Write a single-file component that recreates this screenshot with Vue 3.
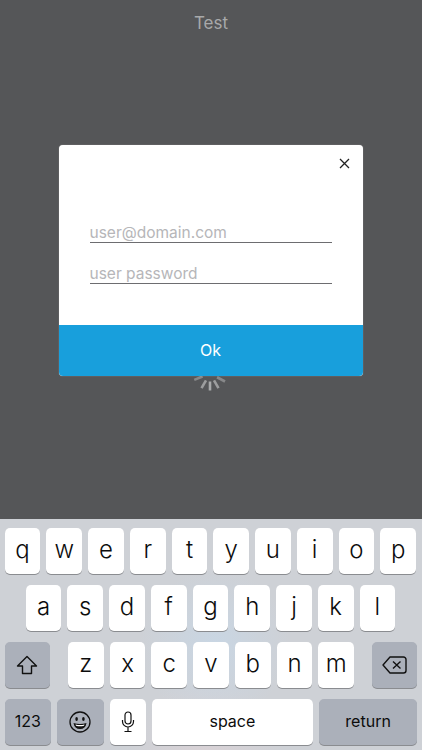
<script setup>
const row1 = ['q', 'w', 'e', 'r', 't', 'y', 'u', 'i', 'o', 'p']
const row2 = ['a', 's', 'd', 'f', 'g', 'h', 'j', 'k', 'l']
const row3 = ['z', 'x', 'c', 'v', 'b', 'n', 'm']
const spokes = [
  { a: 68, o: 0.6 },
  { a: 30, o: 0.85 },
  { a: 0, o: 1 },
  { a: -30, o: 0.85 },
  { a: -62, o: 0.6 },
]
</script>

<template>
  <div class="screen">
    <main class="stage">
      <header class="title">Test</header>
      <section class="modal">
        <div class="modal-top">
          <svg class="close" width="11" height="11" viewBox="0 0 11 11" aria-label="Close">
            <path d="M1 1 L10 10 M10 1 L1 10" stroke="#222" stroke-width="1.3" fill="none" />
          </svg>
        </div>
        <form class="fields" @submit.prevent>
          <div class="field">user@domain.com</div>
          <div class="field">user password</div>
        </form>
        <button class="ok" type="button">Ok</button>
      </section>
      <svg class="spinner" width="36" height="16" viewBox="-18 2.5 36 16" aria-hidden="true">
        <line
          v-for="s in spokes"
          :key="s.a"
          x1="0"
          y1="8"
          x2="0"
          y2="17"
          stroke="#a9aaab"
          stroke-width="2.6"
          :opacity="s.o"
          :transform="`rotate(${s.a} 0 0)`"
        />
      </svg>
    </main>

    <section class="keyboard">
      <div class="row row1">
        <div v-for="k in row1" :key="k" class="key">{{ k }}</div>
      </div>
      <div class="row row2">
        <div v-for="k in row2" :key="k" class="key">{{ k }}</div>
      </div>
      <div class="row row3">
        <div class="key fn shift">
          <svg width="22" height="20" viewBox="0 0 22 20">
            <path d="M11 1.5 L20.5 11 H15.5 V18.5 H6.5 V11 H1.5 Z" fill="none" stroke="#111" stroke-width="1.4" stroke-linejoin="round" />
          </svg>
        </div>
        <div class="letters">
          <div v-for="k in row3" :key="k" class="key">{{ k }}</div>
        </div>
        <div class="key fn del">
          <svg width="25" height="18" viewBox="0 0 25 18">
            <path d="M8 1 H21.5 A2.5 2.5 0 0 1 24 3.5 V14.5 A2.5 2.5 0 0 1 21.5 17 H8 L1 9 Z" fill="none" stroke="#111" stroke-width="1.4" stroke-linejoin="round" />
            <path d="M11 5.5 L18.5 12.5 M18.5 5.5 L11 12.5" stroke="#111" stroke-width="1.4" fill="none" />
          </svg>
        </div>
      </div>
      <div class="row row4">
        <div class="key fn small w123">123</div>
        <div class="key fn emoji">
          <svg width="22" height="22" viewBox="0 0 22 22">
            <circle cx="11" cy="11" r="10" fill="none" stroke="#111" stroke-width="1.3" />
            <ellipse cx="7.6" cy="8" rx="1.3" ry="2" fill="#111" />
            <ellipse cx="14.4" cy="8" rx="1.3" ry="2" fill="#111" />
            <path d="M4.5 12 Q11 14.2 17.5 12 Q16.5 18 11 18 Q5.5 18 4.5 12 Z" fill="#111" />
            <path d="M6.5 13.4 Q11 14.8 15.5 13.4 L15 14.8 Q11 15.8 7 14.8 Z" fill="#fff" />
          </svg>
        </div>
        <div class="key mic">
          <svg width="14" height="22" viewBox="0 0 14 22">
            <rect x="4" y="1" width="6" height="12" rx="3" fill="none" stroke="#111" stroke-width="1.2" />
            <path d="M1.5 9 V10.5 A5.5 5.5 0 0 0 12.5 10.5 V9 M7 16 V20 M3.5 20.5 H10.5" fill="none" stroke="#111" stroke-width="1.2" />
          </svg>
        </div>
        <div class="key small space">space</div>
        <div class="key fn small ret">return</div>
      </div>
    </section>
  </div>
</template>

<style>
html, body { margin: 0; padding: 0; }
</style>

<style scoped>
.screen {
  width: 422px;
  height: 750px;
  display: flex;
  flex-direction: column;
  overflow: hidden;
  font-family: Inter, "Liberation Sans", sans-serif;
}
.stage {
  height: 519px;
  background: #555658;
  display: flex;
  flex-direction: column;
  align-items: center;
}
.title {
  height: 46px;
  line-height: 46px;
  font-size: 17px;
  color: #a8a9aa;
}
.modal {
  position: relative;
  z-index: 1;
  width: 304px;
  height: 231px;
  margin: 99px 0 0 -1px;
  background: #fff;
  border-radius: 4px;
  overflow: hidden;
  display: flex;
  flex-direction: column;
  box-shadow: 0 0 1px rgba(255, 255, 255, 0.6);
}
.modal-top {
  height: 37px;
  display: flex;
  justify-content: flex-end;
  align-items: flex-start;
}
.close { margin: 13px 13px 0 0; }
.fields {
  height: 143px;
  box-sizing: border-box;
  padding: 39px 31px 0;
  display: flex;
  flex-direction: column;
  gap: 19px;
}
.field {
  box-sizing: border-box;
  height: 22px;
  line-height: 23px;
  font-size: 15.5px;
  color: #b6b6b9;
  border-bottom: 1px solid #6d6d70;
}
.ok {
  height: 51px;
  padding: 0 0 2px;
  border: 0;
  background: #189fdc;
  color: #fff;
  font: inherit;
  font-size: 16px;
}
.spinner { margin-left: -3px; }
.keyboard {
  height: 231px;
  box-sizing: border-box;
  padding: 9px 4.7px 5px;
  display: flex;
  flex-direction: column;
  gap: 11px;
  background:
    radial-gradient(circle at 215px 125px, #c9d6e3 0, rgba(201, 214, 227, 0) 75px),
    radial-gradient(circle at 205px 240px, #d9d2d6 0, rgba(217, 210, 214, 0) 80px),
    #ced1d6;
}
.row {
  display: flex;
  height: 46px;
  gap: 6.05px;
}
.row2 { padding-left: 21px; }
.row3 { gap: 0; justify-content: space-between; }
.letters {
  display: flex;
  gap: 6.05px;
}
.key {
  box-sizing: border-box;
  width: 35.7px;
  height: 46px;
  flex: none;
  background: #fff;
  border-radius: 5px;
  box-shadow: 0 1px 0 #8a8c90;
  display: flex;
  align-items: center;
  justify-content: center;
  font-size: 24px;
  font-weight: 300;
  color: #0c0c0c;
  padding-bottom: 4px;
}
.fn { background: #abb0ba; }
.small { font-size: 16px; font-weight: 400; padding-bottom: 2px; }
.shift { width: 45.3px; padding-bottom: 0; }
.del { width: 45.3px; padding-bottom: 0; }
.row4 { gap: 6.3px; }
.w123 { width: 46.3px; }
.emoji { width: 46.3px; padding-bottom: 0; }
.mic { width: 36px; padding-bottom: 0; }
.space { flex: 1; width: auto; }
.ret { width: 98.4px; }
</style>
